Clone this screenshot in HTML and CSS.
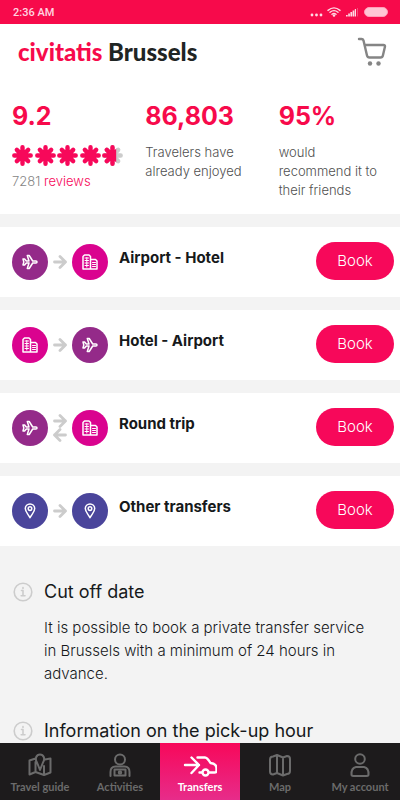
FILE: index.html
```html
<!DOCTYPE html>
<html lang="en">
<head>
<meta charset="utf-8">
<meta name="viewport" content="width=device-width, initial-scale=1">
<title>Civitatis Brussels - Transfers</title>
<link rel="stylesheet" href="styles.css">
</head>
<body>
<svg class="defs" aria-hidden="true">
  <symbol id="plane" viewBox="0 0 16 16">
    <path d="M1 5h1.600l1.700 2H7L5.300 1.500h1.900L10.700 7H14a1 1 0 0 1 0 2h-3.300l-3.500 5.500H5.300L7 9H4.300l-1.700 2H1l.8-3z"/>
  </symbol>
  <symbol id="hotel" viewBox="0 0 16 16">
    <path d="M1 15V2.500L2.500 1h4.500L8.500 2.500V15zM8.500 5.500h5L15 7v8H8.500"/><path class="windows" d="M3 4h3.500M3 6.500h3.500M3 9h3.500M3 11.500h3.500M4.800 3.500V13M10.500 8.500h3M10.500 10.500h3M10.500 12.500h3"/>
  </symbol>
  <symbol id="pin" viewBox="0 0 16 16">
    <path d="M8 14.800C6.500 11.500 3.300 9 3.300 5.600a4.700 4.700 0 0 1 9.400 0C12.700 9 9.500 11.500 8 14.800z"/><circle cx="8" cy="5.600" r="1.800"/>
  </symbol>
  <symbol id="arrow" viewBox="0 0 14 14">
    <path d="M1.500 7h11M7 1.500 12.500 7 7 12.500"/>
  </symbol>
  <symbol id="info" viewBox="0 0 20 20">
    <circle cx="10" cy="10" r="8.800"/><path d="M8.500 8.500H10v5.300M8.200 13.800h3.800M10 5.600v.8"/>
  </symbol>
  <symbol id="star" viewBox="0 0 20 20">
    <path d="M10 2.200v15.600M2.200 10h15.600M4.600 4.600l10.800 10.800M15.400 4.600 4.600 15.400"/>
  </symbol>
</svg>
<div class="app">
  <div class="status">
    <span>2:36 AM</span>
    <svg width="80" height="14" viewBox="0 0 80 14" aria-hidden="true">
      <g fill="#fff" opacity=".85"><circle cx="2" cy="10" r="1.400"/><circle cx="6.500" cy="10" r="1.400"/><circle cx="11" cy="10" r="1.400"/>
      <circle cx="24" cy="10.500" r="1.300"/><path d="M36 11.500V10h1.700v1.500zM38.200 11.500v-3h1.700v3zM40.400 11.500V7h1.700v4.500zM42.600 11.500v-6h1.700v6zM44.800 11.500V4h1.200v7.500z"/><path d="M47 11.500V3h1v8.500z" opacity=".3"/></g>
      <g fill="none" stroke="#fff" stroke-width="1.400" opacity=".85"><path d="M18 5.400q6-5 12 0M20 7.300q4-3.300 8 0M22 9.200q2-1.600 4 0"/></g>
      <rect x="54.500" y="2.500" width="23" height="9" rx="4.500" fill="#ffc4d4" stroke="#ff9db8"/>
    </svg>
  </div>
  <header class="header">
    <h1 class="brand"><span class="brand-name">civitatis</span> Brussels</h1>
    <button class="cart" aria-label="Cart">
      <svg width="30" height="30" viewBox="0 0 30 30"><path d="M2 2h2.500q1.500 0 2 1.500L10 18.500q.5 2 2.500 2h11q2 0 2.400-2L28 9.500Q28 8 26.500 8H8"/><circle class="wheel" cx="13" cy="26.500" r="2.200"/><circle class="wheel" cx="21.500" cy="26.500" r="2.200"/></svg>
    </button>
  </header>
  <main class="content">
    <section class="stats">
      <div>
        <strong class="figure">9.2</strong>
        <div class="stars" role="img" aria-label="4.6 out of 5">
          <svg class="star"><use href="#star"/></svg><svg class="star"><use href="#star"/></svg><svg class="star"><use href="#star"/></svg><svg class="star"><use href="#star"/></svg><svg class="star" viewBox="0 0 20 20"><defs><clipPath id="part"><path d="M0 0h13.500v20H0z"/></clipPath></defs><use class="star-rest" href="#star"/><g clip-path="url(#part)"><use href="#star"/></g></svg>
        </div>
        <p class="reviews">7281 <a href="#reviews">reviews</a></p>
      </div>
      <div><strong class="figure">86,803</strong><p class="caption">Travelers have already enjoyed</p></div>
      <div><strong class="figure">95%</strong><p class="caption">would recommend it to their friends</p></div>
    </section>
    <section class="routes">
      <article class="route">
        <div class="trip"><span class="dot dot-air"><svg><use href="#plane"/></svg></span><span class="arrows"><svg><use href="#arrow"/></svg></span><span class="dot dot-hotel"><svg><use href="#hotel"/></svg></span></div>
        <h2>Airport - Hotel</h2><button class="book">Book</button>
      </article>
      <article class="route">
        <div class="trip"><span class="dot dot-hotel"><svg><use href="#hotel"/></svg></span><span class="arrows"><svg><use href="#arrow"/></svg></span><span class="dot dot-air"><svg><use href="#plane"/></svg></span></div>
        <h2>Hotel - Airport</h2><button class="book">Book</button>
      </article>
      <article class="route">
        <div class="trip"><span class="dot dot-air"><svg><use href="#plane"/></svg></span><span class="arrows"><svg><use href="#arrow"/></svg><svg class="back"><use href="#arrow"/></svg></span><span class="dot dot-hotel"><svg><use href="#hotel"/></svg></span></div>
        <h2>Round trip</h2><button class="book">Book</button>
      </article>
      <article class="route">
        <div class="trip"><span class="dot dot-other"><svg><use href="#pin"/></svg></span><span class="arrows"><svg><use href="#arrow"/></svg></span><span class="dot dot-other"><svg><use href="#pin"/></svg></span></div>
        <h2>Other transfers</h2><button class="book">Book</button>
      </article>
    </section>
    <section class="notes">
      <article class="note">
        <svg class="info"><use href="#info"/></svg>
        <div><h3>Cut off date</h3><p>It is possible to book a private transfer service in Brussels with a minimum of 24 hours in advance.</p></div>
      </article>
      <article class="note">
        <svg class="info"><use href="#info"/></svg>
        <div><h3>Information on the pick-up hour</h3></div>
      </article>
    </section>
  </main>
  <nav class="tabs">
    <a href="#guide"><svg viewBox="0 0 24 24"><path d="M7.500 5.500 1.500 7.500v14l6-2.500 8.500 3 6.500-2.500V5.500L17 6.500M7.500 9v10M16 13v9M12 17 9 9.500C6.500 5.500 8.500 1.500 12 1.500s5.500 4 3 8z"/></svg>Travel guide</a>
    <a href="#activities"><svg viewBox="0 0 24 24"><circle cx="12" cy="6.500" r="5"/><path d="M2.500 23v-4c0-3.500 2-5.500 5-5.500h9c3 0 5 2 5 5.500v4M6.500 22.500v-6h11v6z"/><circle cx="12" cy="19.500" r="1.200"/></svg>Activities</a>
    <a class="active" href="#transfers" aria-current="page"><svg class="car" viewBox="0 0 34 24"><path d="M2 12h14M8.500 4.500 16 12l-7.500 8M14.500 4.500H22c2 0 4 3 5.500 5.500 4 .5 6 2 6 5v3c0 1-1 1.500-2 1.500h-5M16.500 19.500H19"/><circle cx="22.500" cy="19.500" r="3"/></svg>Transfers</a>
    <a href="#map"><svg viewBox="0 0 24 24"><path d="M5 3.500 9 2l6 2.500L19 3q3 0 3 3v12q0 3-3 3l-4 1.500L9 20l-4 1.500q-3 0-3-3v-12q0-3 3-3zM9 2v18M15 4.500v18"/></svg>Map</a>
    <a href="#account"><svg viewBox="0 0 24 24"><circle cx="12" cy="6" r="4.800"/><path d="M8 14h8q5 1 4.500 8-.5 1-2 1h-13q-1.500 0-2-1Q3 15 8 14z"/></svg>My account</a>
  </nav>
</div>
</body>
</html>
```
FILE: styles.css
```css
* { box-sizing: border-box; }
body { margin: 0; font-family: Inter, "Open Sans", sans-serif; color: #16191b; background: #f3f3f3; }
h1, h2, h3, p { margin: 0; }
button { border: 0; padding: 0; font: inherit; cursor: pointer; }
a { text-decoration: none; color: inherit; }
svg { display: block; fill: none; stroke: currentColor; stroke-linecap: round; stroke-linejoin: round; }
.defs { display: none; }
.app { display: flex; flex-direction: column; height: 100vh; }

.status { display: flex; flex: none; justify-content: space-between; align-items: center; height: 24px; padding: 0 10px 0 13px; background: #f70a4b; color: #ffd5e0; font: 500 11px Roboto, sans-serif; }
.status svg { stroke: none; }
.header { display: flex; flex: none; justify-content: space-between; align-items: center; height: 56px; padding: 0 13px 0 18px; background: #fff; }
.brand { font: 900 24px/32px Lato, sans-serif; color: #1f2524; }
.brand-name { color: #f70a4b; }
.cart { background: none; color: #858585; }
.cart svg { stroke-width: 2.4; }
.cart .wheel { fill: currentColor; stroke: none; }

.content { flex: 1; min-height: 0; overflow-y: auto; scrollbar-width: none; }
.stats { display: grid; grid-template-columns: repeat(3, 1fr); padding: 20px 0 14px; background: #fff; }
.stats > div { padding: 0 10px 0 12px; }
.figure { display: block; font-size: 25px; line-height: 32px; font-weight: 700; color: #f70a4b; }
.caption { margin-top: 11px; font-size: 13px; line-height: 19px; font-weight: 300; color: #505050; }
.stars { display: flex; justify-content: space-between; margin-top: 13px; color: #f7085a; }
.star { width: 21px; height: 21px; stroke-width: 4.2; }
.star-rest { color: #ccc; }
.reviews { margin-top: 6px; font-size: 13px; line-height: 19px; font-weight: 300; color: #858585; }
.reviews a { color: #f7085a; }

.routes { display: grid; gap: 13px; padding-top: 13px; }
.route { display: flex; align-items: center; height: 70px; padding: 0 6px 0 12px; background: #fff; }
.route h2 { flex: 1; margin-left: 11px; padding-bottom: 8px; font-size: 15px; line-height: 20px; font-weight: 700; }
.trip { display: flex; align-items: center; }
.dot { display: grid; place-items: center; width: 36px; height: 36px; border-radius: 50%; color: #fff; }
.dot svg { width: 16px; height: 16px; stroke-width: 1.5px; }
.windows { stroke-width: 1px; }
.dot-air { background: #942a89; }
.dot-hotel { background: #da038f; }
.dot-other { background: #4a459b; }
.arrows { display: grid; justify-items: center; width: 24px; color: #ccc; }
.arrows svg { width: 14px; height: 14px; stroke-width: 2.8px; }
.arrows .back { transform: rotate(180deg); }
.book { width: 78px; height: 38px; margin-bottom: 3px; border-radius: 19px; background: #f7085a; color: #fff; font-size: 15px; font-weight: 300; }

.notes { display: grid; gap: 34px; padding: 34px 16px 24px 13px; }
.note { display: grid; grid-template-columns: 20px 1fr; gap: 11px; }
.info { width: 20px; height: 20px; margin-top: 2px; color: #ccc; stroke-width: 1.6; }
.note h3 { font-size: 18px; line-height: 24px; font-weight: 400; }
.note p { margin-top: 12px; padding-right: 10px; font-size: 15px; line-height: 23px; font-weight: 300; }

.tabs { display: grid; flex: none; grid-template-columns: repeat(5, 1fr); height: 57px; background: #1d1b1c; color: #6b6b6b; }
.tabs a { display: flex; flex-direction: column; align-items: center; gap: 2px; padding-top: 10px; font: 700 11px/16px Lato, sans-serif; white-space: nowrap; }
.tabs svg { width: 24px; height: 24px; stroke-width: 2; }
.tabs .car { width: 34px; stroke-width: 2.4; }
.tabs .active { background: linear-gradient(#f7085a, #e72c8a); color: #fff; }
```
